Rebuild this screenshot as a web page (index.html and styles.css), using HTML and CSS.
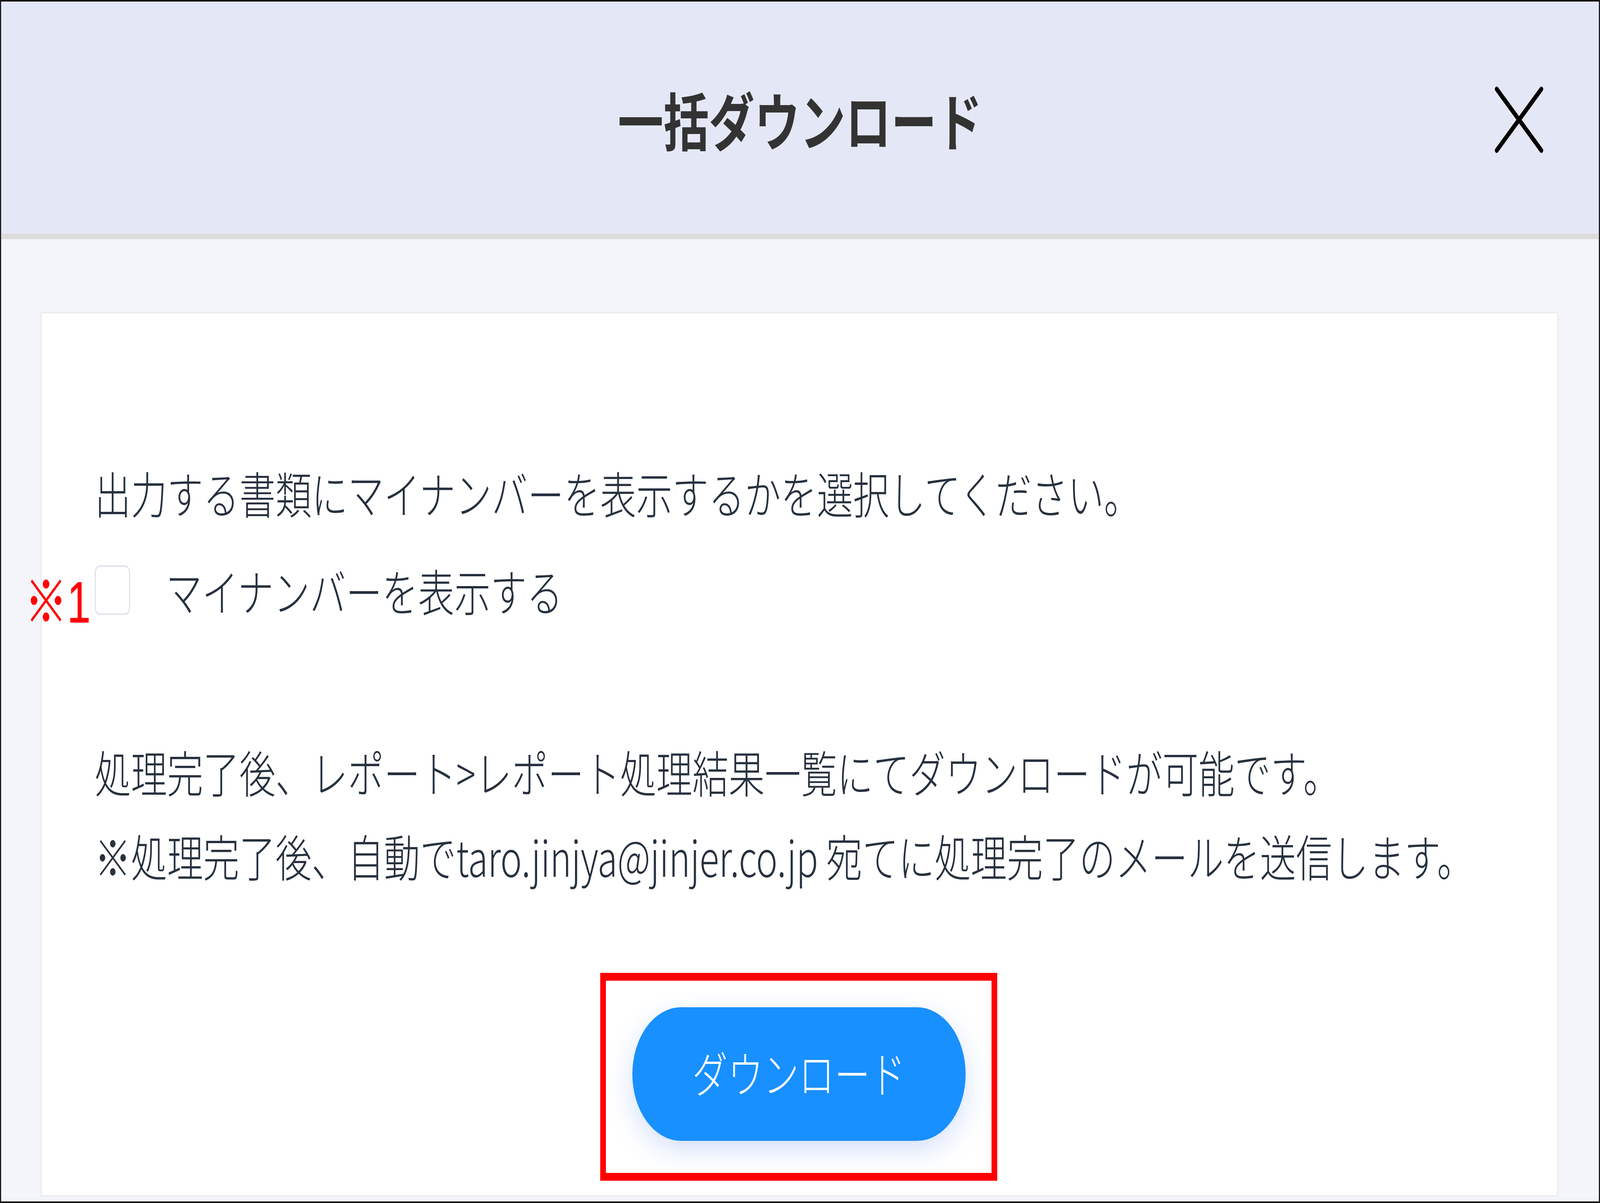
FILE: index.html
```html
<!DOCTYPE html>
<html lang="ja">
<head>
<meta charset="utf-8">
<title>一括ダウンロード</title>
<link rel="stylesheet" href="styles.css">
</head>
<body>
<div class="frame">
  <header class="modal-header">
    <div class="spacer"></div>
    <h1 class="title">一括ダウンロード</h1>
    <button class="close" aria-label="閉じる">
      <svg viewBox="0 0 173 173" width="173" height="173">
        <line x1="8" y1="8" x2="165" y2="165" />
        <line x1="165" y1="8" x2="8" y2="165" />
      </svg>
    </button>
  </header>
  <main class="modal-body">
    <section class="card">
      <p class="lead">出力する書類にマイナンバーを表示するかを選択してください。</p>
      <div class="check-row">
        <span class="note-mark">※1</span>
        <span class="checkbox"></span>
        <span class="check-label">マイナンバーを表示する</span>
      </div>
      <div class="info">
        <p>処理完了後、レポート&gt;レポート処理結果一覧にてダウンロードが可能です。</p>
        <p>※処理完了後、自動でtaro.jinjya@jinjer.co.jp 宛てに処理完了のメールを送信します。</p>
      </div>
      <div class="btn-wrap">
        <button class="download">ダウンロード</button>
        <span class="highlight"></span>
      </div>
    </section>
  </main>
</div>
<script src="fit.js"></script>
</body>
</html>
```
FILE: fit.js
```js
(function () {
  var frame = document.querySelector('.frame');
  function fit() {
    var sx = window.innerWidth / 5622;
    var sy = window.innerHeight / 3079;
    frame.style.transform = 'scale(' + sx + ',' + sy + ')';
  }
  fit();
  window.addEventListener('resize', fit);
})();
```
FILE: styles.css
```css
html, body {
  margin: 0;
  padding: 0;
  overflow: hidden;
}
body {
  font-family: "Noto Sans CJK JP", "Noto Sans", sans-serif;
  color: #27313f;
}
.frame {
  box-sizing: border-box;
  width: 5622px;
  height: 3079px;
  transform-origin: 0 0;
  border: 4px solid #151515;
  display: flex;
  flex-direction: column;
}
.modal-header {
  height: 594px;
  flex: none;
  background: #e4e8f6;
  border-bottom: 14px solid #dcdcdc;
  display: grid;
  grid-template-columns: 1fr auto 1fr;
  align-items: center;
}
.title {
  margin: 4px 0 0;
  font-size: 160px;
  font-weight: 700;
  color: #333333;
  line-height: 1.2;
}
.close {
  justify-self: end;
  margin: 10px 194px 0 0;
  padding: 0;
  border: none;
  background: transparent;
  width: 173px;
  height: 173px;
  display: block;
}
.close svg {
  display: block;
}
.close line {
  stroke: #000;
  stroke-width: 13;
  stroke-linecap: round;
}
.modal-body {
  flex: 1;
  background: #f4f5fa;
  padding: 186px 143px 12px 139px;
  display: flex;
  flex-direction: column;
}
.card {
  flex: 1;
  background: #ffffff;
  border: 4px solid #ececf0;
  padding: 351px 190px 0 186px;
  display: flex;
  flex-direction: column;
}
.lead, .info p {
  margin: 0;
  font-size: 127px;
  line-height: 215px;
  font-weight: 300;
  white-space: nowrap;
}
.check-row {
  position: relative;
  margin-top: 35px;
  height: 215px;
  display: flex;
  align-items: center;
}
.checkbox {
  box-sizing: border-box;
  width: 124px;
  height: 127px;
  margin-left: 0;
  border: 4px solid #e0e3ea;
  border-radius: 18px;
  background: #fff;
}
.check-label {
  margin-left: 126px;
  font-size: 127px;
  font-weight: 300;
  line-height: 215px;
}
.note-mark {
  position: absolute;
  left: -245px;
  top: 65px;
  font-family: "Liberation Sans", "Noto Sans CJK JP", sans-serif;
  font-size: 148px;
  line-height: 148px;
  color: #ff0000;
  font-weight: 400;
  -webkit-text-stroke: 1px #ff0000;
}
.info {
  margin-top: 249px;
}
.btn-wrap {
  position: relative;
  align-self: center;
  margin-top: 281px;
}
.download {
  display: block;
  width: 1171px;
  height: 342px;
  border: none;
  border-radius: 171px;
  background: #1890ff;
  color: #ffffff;
  font-family: "Noto Sans CJK JP", "Noto Sans", sans-serif;
  font-size: 125px;
  font-weight: 300;
  padding: 0 0 14px;
  box-shadow: 0 24px 80px rgba(40, 100, 230, 0.2);
}
.highlight {
  position: absolute;
  top: -88px;
  left: -113px;
  right: -111px;
  bottom: -102px;
  border: 20px solid #ff0000;
}
```
